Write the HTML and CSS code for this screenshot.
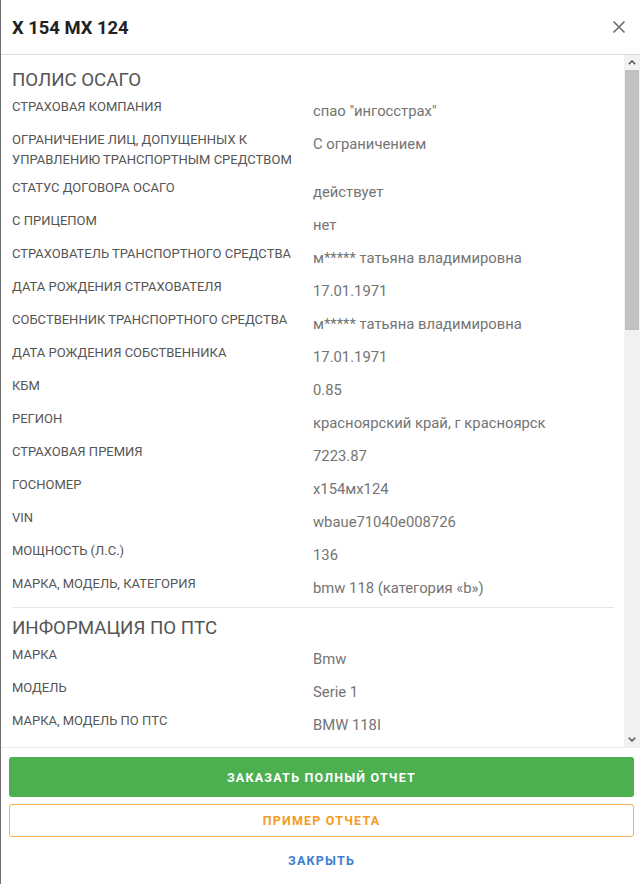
FILE: index.html
```html
<!DOCTYPE html>
<html lang="ru">
<head>
<meta charset="utf-8">
<link rel="stylesheet" href="styles.css">
</head>
<body>
<div class="modal">
  <header class="modal-header">
    <h1 class="modal-title">X 154 MX 124</h1>
    <button class="close-btn" aria-label="Закрыть">
      <svg width="14" height="14" viewBox="0 0 14 14"><path d="M1.5 1.5 L12.5 12.5 M12.5 1.5 L1.5 12.5" stroke="#6b6b6b" stroke-width="1.6" fill="none"/></svg>
    </button>
  </header>
  <div class="modal-body">
    <div class="content">
      <section class="section first">
        <h2 class="section-title">Полис ОСАГО</h2>
        <div class="row"><div class="label">Страховая компания</div><div class="value">спао "ингосстрах"</div></div>
        <div class="row"><div class="label">Ограничение лиц, допущенных к управлению транспортным средством</div><div class="value">С ограничением</div></div>
        <div class="row"><div class="label">Статус договора ОСАГО</div><div class="value">действует</div></div>
        <div class="row"><div class="label">С прицепом</div><div class="value">нет</div></div>
        <div class="row"><div class="label">Страхователь транспортного средства</div><div class="value">м***** татьяна владимировна</div></div>
        <div class="row"><div class="label">Дата рождения страхователя</div><div class="value">17.01.1971</div></div>
        <div class="row"><div class="label">Собственник транспортного средства</div><div class="value">м***** татьяна владимировна</div></div>
        <div class="row"><div class="label">Дата рождения собственника</div><div class="value">17.01.1971</div></div>
        <div class="row"><div class="label">КБМ</div><div class="value">0.85</div></div>
        <div class="row"><div class="label">Регион</div><div class="value">красноярский край, г красноярск</div></div>
        <div class="row"><div class="label">Страховая премия</div><div class="value">7223.87</div></div>
        <div class="row"><div class="label">Госномер</div><div class="value">х154мх124</div></div>
        <div class="row"><div class="label">VIN</div><div class="value">wbaue71040e008726</div></div>
        <div class="row"><div class="label">Мощность (л.с.)</div><div class="value">136</div></div>
        <div class="row"><div class="label">Марка, модель, категория</div><div class="value">bmw 118 (категория «b»)</div></div>
      </section>
      <section class="section">
        <h2 class="section-title">Информация по ПТС</h2>
        <div class="row"><div class="label">Марка</div><div class="value">Bmw</div></div>
        <div class="row"><div class="label">Модель</div><div class="value">Serie 1</div></div>
        <div class="row"><div class="label">Марка, модель по ПТС</div><div class="value">BMW 118I</div></div>
      </section>
    </div>
    <div class="scrollbar">
      <div class="sb-arrow">
        <svg width="8" height="5" viewBox="0 0 8 5"><path d="M0.8 4.2 L4 1 L7.2 4.2" stroke="#505050" stroke-width="1.5" fill="none"/></svg>
      </div>
      <div class="sb-track"><div class="sb-thumb"></div></div>
      <div class="sb-arrow">
        <svg width="8" height="5" viewBox="0 0 8 5"><path d="M0.8 0.8 L4 4 L7.2 0.8" stroke="#505050" stroke-width="1.5" fill="none"/></svg>
      </div>
    </div>
  </div>
  <footer class="modal-footer">
    <button class="btn btn-primary">Заказать полный отчет</button>
    <button class="btn btn-outline">Пример отчета</button>
    <button class="btn btn-link">Закрыть</button>
  </footer>
</div>
</body>
</html>
```
FILE: styles.css
```css
* { box-sizing: border-box; }
html, body { margin: 0; padding: 0; }
body {
  width: 640px;
  height: 884px;
  background: #fff;
  font-family: Roboto, "Noto Sans", Arial, sans-serif;
  overflow: hidden;
}
.modal {
  height: 884px;
  display: flex;
  flex-direction: column;
  border-left: 1px solid #707070;
}
.modal-header {
  height: 55px;
  flex: none;
  display: flex;
  align-items: center;
  justify-content: space-between;
  padding: 0 14px 0 11px;
  border-bottom: 1px solid #dcdcdc;
}
.modal-title {
  margin: 0;
  font-size: 18.4px;
  font-weight: 700;
  color: #222;
}
.close-btn {
  border: 0;
  background: none;
  padding: 0;
  width: 14px;
  height: 14px;
  display: flex;
  cursor: pointer;
}
.modal-body {
  height: 693px;
  flex: none;
  display: flex;
  border-bottom: 1px solid #ececec;
}
.content {
  flex: 1;
  overflow: hidden;
  padding: 0 10px 0 11px;
}
.section { padding-top: 8px; }
.section.first { padding-top: 13px; border-bottom: 1px solid #e6e6e6; }
.section-title {
  margin: 0 0 5px 0;
  font-size: 18.7px;
  line-height: 24px;
  font-weight: 400;
  text-transform: uppercase;
  color: #555;
}
.row {
  display: grid;
  grid-template-columns: 301px 1fr;
  align-items: start;
  padding-bottom: 8px;
}
.label {
  font-size: 13px;
  line-height: 20px;
  text-transform: uppercase;
  color: #555;
  padding-right: 8px;
}
.value {
  font-size: 14.8px;
  line-height: 21px;
  margin-top: 4px;
  color: #747474;
}
.scrollbar {
  width: 16px;
  flex: none;
  display: flex;
  flex-direction: column;
  background: #f1f1f1;
}
.sb-arrow {
  height: 15px;
  flex: none;
  display: flex;
  align-items: center;
  justify-content: center;
}
.sb-track { flex: 1; padding: 0 1px; }
.sb-thumb {
  height: 260px;
  background: #c1c1c1;
}
.modal-footer {
  flex: 1;
  display: flex;
  flex-direction: column;
  padding: 9px 6px 0 8px;
}
.btn {
  font-family: Roboto, "Noto Sans", Arial, sans-serif;
  font-size: 12.5px;
  font-weight: 700;
  letter-spacing: 1.2px;
  text-transform: uppercase;
  border-radius: 3px;
  cursor: pointer;
  width: 100%;
}
.btn-primary {
  height: 40px;
  background: #4caf50;
  border: 0;
  color: #fff;
}
.btn-outline {
  margin-top: 7px;
  height: 33px;
  background: #fff;
  border: 1px solid #f6b24a;
  color: #f39c1f;
}
.btn-link {
  margin-top: 4px;
  height: 38px;
  background: none;
  border: 0;
  color: #3b7fd0;
}
```
